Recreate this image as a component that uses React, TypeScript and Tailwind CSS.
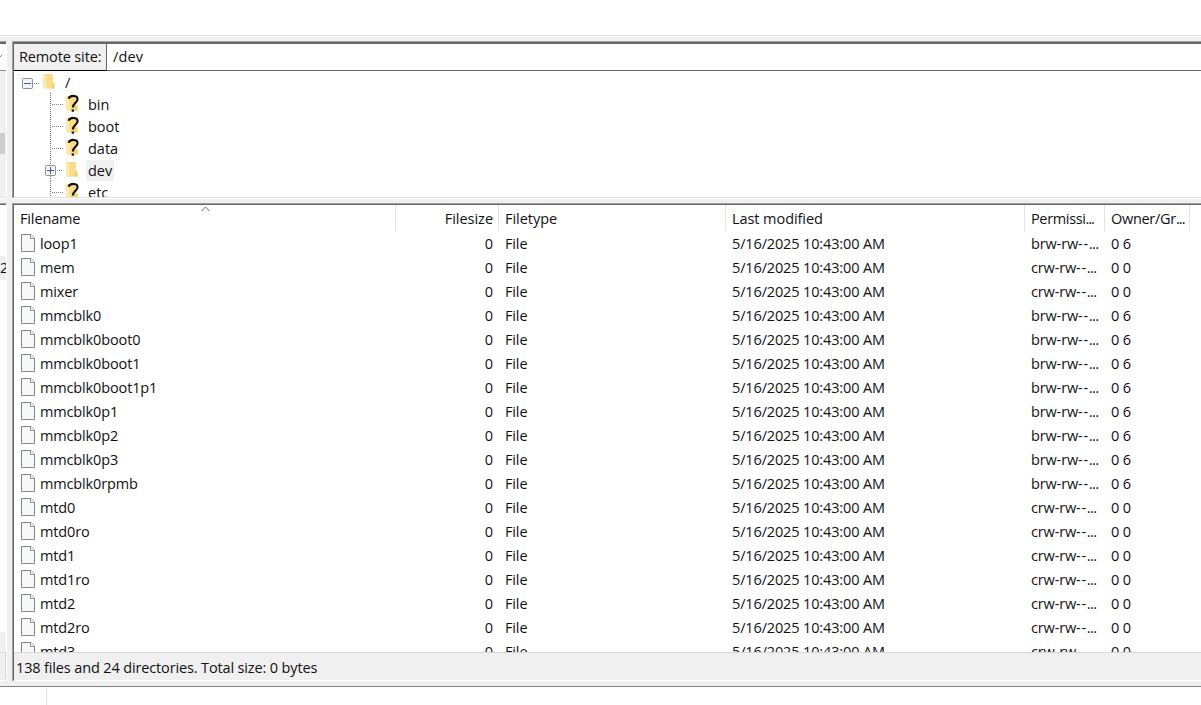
import React from 'react';

const files: [string, string, string][] = [
  ['loop1', 'b', '6'], ['mem', 'c', '0'], ['mixer', 'c', '0'], ['mmcblk0', 'b', '6'],
  ['mmcblk0boot0', 'b', '6'], ['mmcblk0boot1', 'b', '6'], ['mmcblk0boot1p1', 'b', '6'],
  ['mmcblk0p1', 'b', '6'], ['mmcblk0p2', 'b', '6'], ['mmcblk0p3', 'b', '6'],
  ['mmcblk0rpmb', 'b', '6'], ['mtd0', 'c', '0'], ['mtd0ro', 'c', '0'], ['mtd1', 'c', '0'],
  ['mtd1ro', 'c', '0'], ['mtd2', 'c', '0'], ['mtd2ro', 'c', '0'], ['mtd3', 'c', '0'],
];

function FileIcon() {
  return (
    <svg width="14" height="18" viewBox="0 0 14 18" className="mb-px shrink-0">
      <path d="M.5.5h9.500l3.500 3.500v13.500H.5z" fill="#f7f8f9" stroke="#858585" />
      <path d="M9.500.5v4h4" fill="#fff" stroke="#8f8f8f" />
    </svg>
  );
}

function Folder({ unknown = false }: { unknown?: boolean }) {
  return (
    <svg width="14" height="20" viewBox="0 0 14 20" className="shrink-0">
      <path d="M1 2h10v9l1.500 1v4.500H4z" fill="#f8dc88" />
      <path d="M1 2l3.500 1.500v14L1 16z" fill="#ffe9ab" />
      <path d="M9.500 12l3-1v5.500h-3z" fill="#f4d273" />
      {unknown && (
        <>
          <path d="M3.600 4.800C4.800 1 12.600.8 12.600 5.200c0 3.600-4.700 3.600-4.700 8.300" fill="none" stroke="#0c0c0c" strokeWidth="2.1" />
          <path d="M6.700 15.500h2.300v2.200H6.700z" fill="#0c0c0c" />
        </>
      )}
    </svg>
  );
}

function Expander({ plus = false }: { plus?: boolean }) {
  return (
    <svg width="11" height="11" viewBox="0 0 11 11" className="shrink-0">
      <rect x=".5" y=".5" width="10" height="10" rx="1" fill="#f4f4f4" stroke="#919191" />
      <path d={plus ? 'M2 5.500h7M5.500 2v7' : 'M2 5.500h7'} stroke="#4259a5" />
    </svg>
  );
}

const dotsDown = 'w-px shrink-0 bg-[repeating-linear-gradient(to_bottom,#808080_0_1px,transparent_1px_2px)]';
const dotsAcross = 'h-px shrink-0 bg-[repeating-linear-gradient(to_right,#808080_0_1px,transparent_1px_2px)]';

function TreeRow({ name }: { name: string }) {
  const open = name === 'dev';
  return (
    <div className="flex h-[22px] shrink-0 items-center pl-[31px]">
      <div className="flex h-full w-[20px] items-center">
        {open ? (
          <div className="flex h-full flex-col items-center">
            <div className={`${dotsDown} h-[6px]`} />
            <Expander plus />
            <div className={`${dotsDown} h-[5px]`} />
          </div>
        ) : (
          <div className={`${dotsDown} ml-[5px] h-full`} />
        )}
        <div className={open ? `${dotsAcross} ml-px w-[5px]` : `${dotsAcross} ml-px w-[12px]`} />
      </div>
      <Folder unknown={!open} />
      <span className={open ? 'ml-[7px] bg-[#f0f0f0] px-[2px] leading-[21px] tracking-normal' : 'ml-[9px] leading-[21px] tracking-normal'}>{name}</span>
    </div>
  );
}

function LeftStrip() {
  return (
    <div className="flex w-[12px] shrink-0 flex-col overflow-hidden">
      <div className="flex h-[157px] w-[7px] shrink-0 flex-col border-t border-r border-b border-t-[#a0a0a0] border-r-white border-b-[#e3e3e3]">
        <div className="h-[29px] w-[6px] shrink-0 border-t-2 border-b border-[#696969] border-b-[#8c8c8c] bg-white">
          <svg width="3" height="26" viewBox="0 0 3 26"><path d="M-1 14l3-3" stroke="#777" fill="none" /></svg>
        </div>
        <div className="mt-[62px] h-[21px] w-[5px] bg-[#cdcdcd]" />
      </div>
      <div className="h-px w-[7px] shrink-0 bg-white" />
      <div className="mt-[4px] flex h-[478px] w-[7px] shrink-0 flex-col border-t border-r border-b border-t-[#a0a0a0] border-r-white border-b-white">
        <div className="h-[52px] w-[6px] shrink-0 border-t border-[#696969] bg-white" />
        <div className="h-[24px] w-[6px] shrink-0 overflow-hidden bg-[#f0f0f0] leading-[24px]"><span>2</span></div>
        <div className="h-[352px] w-[6px] shrink-0 bg-white" />
        <div className="h-[20px] w-[6px] shrink-0" />
        <div className="h-[27px] w-[6px] border-t border-r border-[#d7d7d7]" />
      </div>
    </div>
  );
}

export default function App() {
  return (
    <div className="flex h-[705px] w-[1201px] flex-col overflow-hidden bg-white font-['Open_Sans','Noto_Sans',sans-serif] text-[14.5px] tracking-[-0.14px] whitespace-pre text-[#111]">
      <div className="h-[36px] shrink-0 border-b border-[#e3e3e3]" />
      <div className="flex h-[650px] shrink-0 border-t border-white bg-[#f0f0f0] pt-[4px]">
        <LeftStrip />
        <div className="flex min-w-0 flex-1 flex-col">
          <div className="h-[157px] shrink-0 overflow-hidden border-t border-l border-[#a0a0a0]">
            <div className="flex h-full flex-col border-t-2 border-b border-l border-[#696969] border-b-[#e3e3e3] bg-white">
              <div className="flex h-[27px] shrink-0 border-b border-[#696969]">
                <div className="-mb-px w-[93px] border-r border-b border-[#696969] border-b-black bg-[#f0f0f0] pl-[5px] leading-[26px]">Remote site:</div>
                <div className="pl-[6px] leading-[26px] tracking-[0.1px]">/dev</div>
              </div>
              <div className="flex min-h-0 flex-1 flex-col overflow-hidden">
                <div className="flex h-[22px] shrink-0 items-center pt-[2px] pl-[8px]">
                  <Expander />
                  <div className={`${dotsAcross} ml-px w-[6px]`} />
                  <div className="mb-[2px] ml-[2px] flex"><Folder /></div>
                  <span className="ml-[9px]">/</span>
                </div>
                {['bin', 'boot', 'data', 'dev', 'etc'].map((n) => <TreeRow key={n} name={n} />)}
              </div>
            </div>
          </div>
          <div className="h-px shrink-0 bg-white" />
          <div className="h-[4px] shrink-0" />
          <div className="h-[478px] shrink-0 border-t border-l border-[#a0a0a0]">
            <div className="flex h-full flex-col border-t border-b border-l border-[#696969] border-b-white bg-white">
              <div className="relative flex h-[26px] shrink-0 leading-[27px]">
                <svg width="10" height="6" viewBox="0 0 10 6" className="absolute top-px left-[187px]"><path d="M.5 5l4-4 4 4" fill="none" stroke="#666" /></svg>
                <div className="w-[382px] border-r border-[#e3e3e3] pl-[6px]">Filename</div>
                <div className="w-[103px] border-r border-[#e3e3e3] pr-[5px] text-right tracking-[-0.03px]">Filesize</div>
                <div className="w-[227px] border-r border-[#e3e3e3] pl-[6px] tracking-[-0.03px]">Filetype</div>
                <div className="w-[299px] border-r border-[#e3e3e3] pl-[6px] tracking-[-0.07px]">Last modified</div>
                <div className="w-[80px] border-r border-[#e3e3e3] pl-[6px] tracking-[-0.35px]">Permissi<span className="tracking-[-1.1px]">...</span></div>
                <div className="w-[85px] border-r border-[#e3e3e3] pl-[6px] tracking-[-0.3px]">Owner/Gr<span className="tracking-[-0.9px]">...</span></div>
              </div>
              <div className="min-h-0 flex-1 overflow-hidden">
                {files.map(([name, kind, group]) => (
                  <div key={name} className="flex h-[24px] leading-[25px]">
                    <div className="flex w-[382px] items-center gap-[5px] pl-[7px]"><FileIcon /><span>{name}</span></div>
                    <div className="w-[103px] pr-[6px] text-right">0</div>
                    <div className="w-[227px] pl-[6px]">File</div>
                    <div className="w-[299px] pl-[6px]">5/16/2025 10:43:00 AM</div>
                    <div className="w-[80px] pl-[6px]">{kind}rw-rw<span className="tracking-[0.7px]">--</span><span className="tracking-[-0.6px]">...</span></div>
                    <div className="pl-[6px]">0 {group}</div>
                  </div>
                ))}
              </div>
              <div className="h-[28px] shrink-0 border-t border-[#d7d7d7] bg-[#f0f0f0] pl-[2px] leading-[29px]">138 files and 24 directories. Total size: 0 bytes</div>
            </div>
          </div>
        </div>
      </div>
      <div className="flex-1 border-t border-[#828282]"><div className="mt-px h-full w-[47px] border-r border-[#e3e3e3]" /></div>
    </div>
  );
}
